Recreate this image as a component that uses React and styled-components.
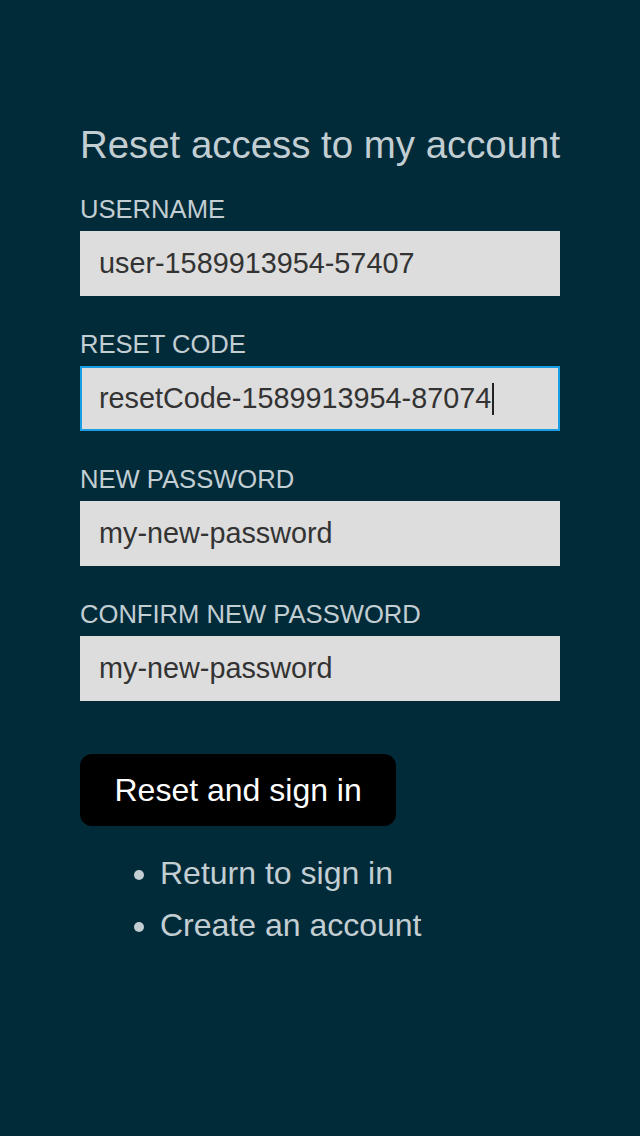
import React from 'react';
import styled, { createGlobalStyle } from 'styled-components';

const GlobalStyle = createGlobalStyle`
    html, body {
        margin: 0;
        padding: 0;
        background: #022b39;
        font-family: "Liberation Sans", Arial, sans-serif;
    }
`;

const Page = styled.main`
    min-height: 1136px;
    background: #022b39;
    color: #c3ced3;
    padding: 123px 80px 0;
    box-sizing: border-box;
`;

const Form = styled.form`
    width: 480px;
    display: flex;
    flex-direction: column;
`;

const Title = styled.h1`
    margin: 0 0 28px;
    font-size: 38.4px;
    font-weight: 400;
    line-height: normal;
    white-space: nowrap;
`;

const Field = styled.div`
    display: flex;
    flex-direction: column;
    margin-bottom: 33.9px;
    &:last-of-type {
        margin-bottom: 53.5px;
    }
`;

const Label = styled.label`
    font-size: 25.6px;
    text-transform: uppercase;
    line-height: normal;
    margin-bottom: 7px;
`;

const InputWrap = styled.div`
    position: relative;
`;

const Input = styled.input`
    display: block;
    box-sizing: border-box;
    width: 100%;
    height: 65px;
    padding: 0 17px;
    border: 2px solid ${p => (p.$active ? '#1a9ee3' : 'transparent')};
    border-radius: 0;
    background: #dddddd;
    color: #333333;
    font-family: "Liberation Sans", Arial, sans-serif;
    font-size: 28.8px;
    outline: none;
`;

const Caret = styled.span`
    position: absolute;
    top: 17px;
    left: ${p => p.$left}px;
    width: 2px;
    height: 32px;
    background: #222222;
`;

const Button = styled.button`
    align-self: flex-start;
    border: none;
    border-radius: 12px;
    background: #000000;
    color: #ffffff;
    font-family: "Liberation Sans", Arial, sans-serif;
    font-size: 32px;
    line-height: normal;
    padding: 17.6px 34.5px;
    cursor: pointer;
`;

const Links = styled.ul`
    margin: 21px 0 0;
    padding-left: 80px;
    font-size: 32px;
    line-height: 52px;
    li::marker {
        color: #c3ced3;
    }
    a {
        color: #c3ced3;
        text-decoration: none;
    }
`;

const fields = [
    { id: 'username', label: 'Username', value: 'user-1589913954-57407' },
    { id: 'code', label: 'Reset code', value: 'resetCode-1589913954-87074', active: true, caret: 412 },
    { id: 'password', label: 'New password', value: 'my-new-password' },
    { id: 'confirm', label: 'Confirm new password', value: 'my-new-password' },
];

export default function App() {
    return (
        <>
            <GlobalStyle />
            <Page>
                <Form onSubmit={e => e.preventDefault()}>
                    <Title>Reset access to my account</Title>
                    {fields.map(f => (
                        <Field key={f.id}>
                            <Label htmlFor={f.id}>{f.label}</Label>
                            <InputWrap>
                                <Input
                                    id={f.id}
                                    type="text"
                                    defaultValue={f.value}
                                    $active={f.active}
                                />
                                {f.caret && <Caret $left={f.caret} />}
                            </InputWrap>
                        </Field>
                    ))}
                    <Button type="submit">Reset and sign in</Button>
                </Form>
                <Links>
                    <li><a href="#signin">Return to sign in</a></li>
                    <li><a href="#create">Create an account</a></li>
                </Links>
            </Page>
        </>
    );
}
